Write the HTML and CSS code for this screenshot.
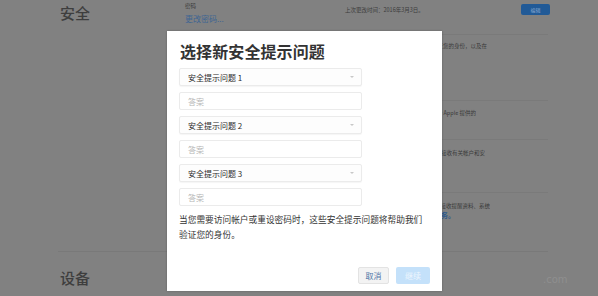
FILE: index.html
```html
<!DOCTYPE html>
<html lang="zh-CN">
<head>
<meta charset="utf-8">
<link rel="stylesheet" href="styles.css">
</head>
<body>
<div class="page">
  <section class="sec">
    <h2 class="sec-title">安全</h2>
    <div class="col-mid">
      <div class="label">密码</div>
      <a class="link">更改密码...</a>
    </div>
    <div class="col-right">
      <div class="top-row">
        <span class="meta">上次更改时间：2016年3月3日。</span>
        <span class="edit-btn">编辑</span>
      </div>
      <div class="row r1"><p class="rt">安全提示问题用于验证您的身份，以及在</p></div>
      <div class="row r2"><p class="rt w2">您的帐户信息用于 Apple 提供的</p></div>
      <div class="row r3"><p class="rt w3">您可以选择接收有关帐户和安</p></div>
      <div class="row r4"><p class="rt w4">用于接收提醒资料、系统</p><p class="rt blue">服务。</p></div>
    </div>
  </section>
  <section class="sec sec2">
    <h2 class="sec-title">设备</h2>
  </section>
  <div class="wm">.com</div>
</div>

<div class="modal">
  <h1 class="m-title">选择新安全提示问题</h1>
  <div class="field sel"><span>安全提示问题 1</span><i class="arr"></i></div>
  <div class="field ans">答案</div>
  <div class="field sel"><span>安全提示问题 2</span><i class="arr"></i></div>
  <div class="field ans">答案</div>
  <div class="field sel"><span>安全提示问题 3</span><i class="arr"></i></div>
  <div class="field ans">答案</div>
  <p class="desc">当您需要访问帐户或重设密码时，这些安全提示问题将帮助我们验证您的身份。</p>
  <div class="actions">
    <span class="btn cancel">取消</span>
    <span class="btn go">继续</span>
  </div>
</div>
</body>
</html>
```
FILE: styles.css
```css
* { box-sizing: border-box; }
html, body { margin: 0; padding: 0; }
body {
  width: 598px;
  height: 296px;
  overflow: hidden;
  background: #818181;
  font-family: "Noto Sans CJK SC", "Noto Sans", sans-serif;
  position: relative;
}
.page {
  width: 598px;
  height: 296px;
  padding-left: 58px;
}
.sec {
  width: 490px;
  display: grid;
  grid-template-columns: 127px 160px 1fr;
  height: 252px;
  border-bottom: 1px solid #797979;
}
.sec2 { height: 44px; border-bottom: none; }
.sec-title {
  margin: 3px 0 0 2px;
  font-size: 15px;
  font-weight: 500;
  color: #3e3e3e;
  line-height: 20px;
}
.sec2 .sec-title { margin-top: 16px; }
.col-mid { padding-top: 2px; }
.label { font-size: 5.5px; color: #3a3a3a; line-height: 8px; }
.link { display: block; font-size: 8px; color: #3e6593; line-height: 12px; margin-top: 3px; }
.col-right { display: flex; flex-direction: column; }
.top-row {
  height: 35px;
  display: flex;
  justify-content: space-between;
  align-items: flex-start;
  border-bottom: 1px solid #7a7a7a;
  padding-top: 4px;
}
.meta { font-size: 5.5px; color: #3c3c3c; line-height: 8px; margin-top: 2px; }
.edit-btn {
  width: 29px; height: 11px;
  background: #215a97;
  border-radius: 2px;
  font-size: 5px; line-height: 11px; text-align: center;
  color: #8aaad0;
  margin-right: -2px;
}
.row { border-bottom: 1px solid #7a7a7a; padding-top: 7px; }
.r1 { height: 66px; }
.r2 { height: 39px; padding-top: 8px; }
.r3 { height: 53px; padding-top: 9px; }
.r4 { height: 59px; padding-top: 9px; border-bottom: none; }
.rt {
  margin: 0;
  width: 142px;
  text-align: right;
  white-space: nowrap;
  overflow: hidden;
  font-size: 5.5px;
  line-height: 9px;
  color: #3a3a3a;
}
.rt.w2 { width: 131px; }
.rt.w3 { width: 140px; }
.rt.w4 { width: 145px; }
.rt.blue { color: #2f5a8c; font-size: 7px; font-weight: 700; width: 110px; }
.wm {
  position: absolute;
  left: 543px; top: 274px;
  font-size: 10px;
  color: #8f8f8f;
  font-family: "DejaVu Sans", sans-serif;
}

.modal {
  position: absolute;
  left: 167px; top: 31px;
  width: 275px; height: 260px;
  background: #fff;
  padding: 9px 12px 0 12px;
  box-shadow: 0 0 2px rgba(0,0,0,.25);
}
.m-title {
  margin: 0 0 6px 1px;
  font-size: 16px;
  font-weight: 700;
  color: #333;
  line-height: 22px;
  letter-spacing: 0.1px;
}
.field {
  width: 183px;
  height: 18px;
  border: 1px solid #ebebeb;
  border-radius: 2px;
  margin-bottom: 6px;
  padding: 0 8px;
  display: flex;
  align-items: center;
  justify-content: space-between;
  font-size: 8px;
}
.sel { color: #2b2b2b; background: #fdfdfd; box-shadow: 0 1px 1px rgba(0,0,0,.04); }
.ans { color: #b5b5b5; }
.arr {
  width: 0; height: 0;
  border-left: 2px solid transparent;
  border-right: 2px solid transparent;
  border-top: 2px solid #c8c8c8;
  margin-right: -1px;
}
.desc {
  margin: 2px 0 0 0;
  width: 250px;
  font-size: 8.7px;
  line-height: 15px;
  color: #333;
}
.actions {
  display: flex;
  justify-content: flex-end;
  gap: 7px;
  margin-top: 25px;
  padding-right: 0;
}
.btn {
  height: 17px;
  font-size: 8px;
  line-height: 17px;
  text-align: center;
  border-radius: 2px;
}
.cancel {
  width: 31px;
  background: #f3f3f3;
  border: 1px solid #e3e3e3;
  color: #4f77a8;
  line-height: 15px;
}
.go {
  width: 34px;
  background: #c4e1fa;
  color: #eef6fe;
}
```
